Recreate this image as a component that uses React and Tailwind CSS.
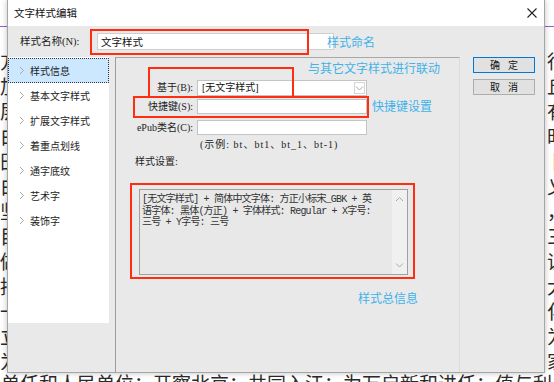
import React from 'react';

// text of the document page that sits behind the dialog
const DOC_LINES = [
  '方案坚持以人民为中心的发展思想，推进各项工作落实落细',
  '加强组织领导，压实工作责任，确保各项任务按期完成',
  '层层传导压力，形成上下联动、齐抓共管的工作格局',
  '白天走访群众，晚上集中研判，及时解决群众反映问题',
  '田间地头开展宣传，引导群众积极参与乡村振兴建设',
  '白纸黑字立下规矩，以制度管人管事，推动工作规范化',
  '坚持问题导向，聚焦重点难点，补齐短板弱项',
  '目标明确，措施有力，工作成效显著，群众满意度提升',
  '做好统筹协调，强化督查考核，确保责任落到实处',
  '持续深化改革，激发内生动力，增强发展后劲',
  '一是加强学习教育；二是强化作风建设；三是狠抓落实',
  '立足当前，着眼长远，统筹推进各项重点工作',
  '为民办实事，解民生难题，切实增强群众获得感',
];
const LAST_LINE = '单任和人民单位；开察北京；共同入江；为万启新和进任；值与利用早素从恋；职民恩；家';
const RIGHT_CHARS = ['行', '丘', '有', '时', '卜', '乂', '，', '三', '证', '大', '化', '为', '家'];

const NAV = ['样式信息', '基本文字样式', '扩展文字样式', '着重点划线', '通字底纹', '艺术字', '装饰字'];

function Chevron({ dir = 'right' }) {
  const d = {
    right: 'M1 1 L4.5 4.5 L1 8',
    down: 'M1 1.5 L4.5 5 L8 1.5',
    up: 'M1 5 L4.5 1.5 L8 5',
  }[dir];
  const size = dir === 'right' ? { width: 6, height: 9 } : { width: 9, height: 6 };
  return (
    <svg {...size} viewBox={`0 0 ${size.width} ${size.height}`}>
      <path d={d} fill="none" stroke="#a8a8a8" strokeWidth="1" />
    </svg>
  );
}

function Field({ label, children, className = '' }) {
  return (
    <div className={`flex items-center h-[15px] ${className}`}>
      <span className="w-[81px] pr-[4px] text-right text-[10px] leading-none text-[#222] whitespace-nowrap">
        {label}
      </span>
      {children}
    </div>
  );
}

export default function App() {
  return (
    <div className="relative w-[554px] h-[382px] overflow-hidden bg-white font-['Liberation_Serif','Noto_Sans_CJK_SC',serif]">
      {/* document page behind: only the strips around the dialog show */}
      <div className="absolute left-0 top-[48px] w-[7px] flex flex-col overflow-hidden">
        {DOC_LINES.map((line, i) => (
          <div key={i} className="h-[25px] text-[19px] leading-[25px] text-[#2a2a2a] whitespace-nowrap font-['Noto_Sans_CJK_SC',sans-serif]">
            {line}
          </div>
        ))}
      </div>
      <div className="absolute left-[545px] top-[48px] w-[9px] pl-[2px] flex flex-col overflow-hidden">
        {RIGHT_CHARS.map((ch, i) => (
          <div key={i} className="h-[25px] text-[19px] leading-[25px] text-[#2a2a2a] whitespace-nowrap font-['Noto_Sans_CJK_SC',sans-serif]">
            {ch}
          </div>
        ))}
      </div>
      <div className="absolute left-0 top-[373px] w-[554px] h-[9px] overflow-hidden">
        <div className="h-[25px] pl-[1px] text-[19px] leading-[25px] -mt-[3px] text-[#2a2a2a] whitespace-nowrap font-['Noto_Sans_CJK_SC',sans-serif]">
          {LAST_LINE}
        </div>
      </div>
      <div className="absolute left-0 right-0 top-[26px] h-px bg-[#9a5bd0]" />

      {/* dialog window */}
      <div className="absolute left-[7px] top-0 w-[538px] h-[373px] flex flex-col border-x border-b border-[#a6a6a6] shadow-[0_0_6px_rgba(0,0,0,0.25)]">
        <div className="h-[26px] shrink-0 bg-white flex items-center justify-between pl-[6px] pr-[7px]">
          <span className="text-[10.5px] text-[#111] font-['Noto_Sans_CJK_SC',sans-serif]">文字样式编辑</span>
          <svg width="10" height="10" viewBox="0 0 10 10">
            <path d="M0.5 0.5 L9.5 9.5 M9.5 0.5 L0.5 9.5" stroke="#222" strokeWidth="1.1" />
          </svg>
        </div>

        <div className="flex-1 bg-[#e9e9e9] flex flex-col">
          {/* name row */}
          <div className="h-[31px] shrink-0 flex items-center pl-[12px]">
            <span className="w-[77px] text-[10.5px] text-[#222] whitespace-nowrap">样式名称(N):</span>
            <div className="w-[237px] h-[17px] bg-white border border-[#cfcfcf] flex items-center pl-[3px] text-[10.5px] text-[#111] font-['Noto_Sans_CJK_SC',sans-serif]">
              文字样式
            </div>
          </div>

          <div className="flex-1 flex">
            {/* nav column */}
            <div className="w-[107px] shrink-0 flex flex-col">
              <div className="w-[101px] h-[266px] bg-white pt-px font-['Noto_Sans_CJK_SC',sans-serif]">
                {NAV.map((item, i) => (
                  <div
                    key={item}
                    className={`h-[25px] flex items-center pl-[10px] gap-[5px] text-[10px] text-[#222] ${
                      i === 0 ? 'bg-[#cce8ff] border border-dotted border-[#334]' : 'border border-transparent'
                    }`}
                  >
                    <Chevron />
                    <span>{item}</span>
                  </div>
                ))}
              </div>
            </div>

            {/* settings panel */}
            <div className="w-[345px] shrink-0 border-l border-t border-l-[#9c9c9c] border-t-[#a8a8a8] border-r border-r-[#dcdcdc] flex flex-col pt-[22px]">
              <Field label="基于(B):">
                <div className="w-[170px] h-[16px] bg-white border border-[#c4c4c4] flex items-center justify-between text-[10px] text-[#111]">
                  <span className="pl-[4px]">[无文字样式]</span>
                  <span className="w-[11px] h-[12px] mr-[1px] border border-[#d6d6d6] flex items-center justify-center">
                    <Chevron dir="down" />
                  </span>
                </div>
              </Field>
              <Field label="快捷键(S):" className="mt-[4px]">
                <div className="w-[170px] h-[15px] bg-white border border-[#c4c4c4]" />
              </Field>
              <Field label="ePub类名(C):" className="mt-[6px]">
                <div className="w-[170px] h-[15px] bg-white border border-[#c4c4c4]" />
              </Field>
              <div className="mt-[5px] h-[11px] pl-[84px] text-[10px] leading-none text-[#222] whitespace-nowrap tracking-[1px]">
                (示例: bt、bt1、bt_1、bt-1)
              </div>
              <div className="mt-[6px] h-[12px] pl-[19px] text-[10px] leading-none text-[#222]">样式设置:</div>

              <div className="mt-[20px] ml-[23px] w-[269px] h-[86px] border border-[#a0a0a0] bg-[#e8e8e8] flex">
                <div className="flex-1 pl-[2px] pt-[4px] text-[10px] leading-[11.5px] text-[#333] whitespace-nowrap font-['Liberation_Mono','Noto_Sans_CJK_SC',monospace] tracking-[-0.8px]">
                  [无文字样式] + 简体中文字体: 方正小标宋_GBK + 英
                  <br />
                  语字体: 黑体(方正) + 字体样式: Regular + X字号:
                  <br />
                  三号 + Y字号: 三号
                </div>
                <div className="w-[15px] bg-[#f0f0f0] flex flex-col items-center justify-between py-[6px]">
                  <Chevron dir="up" />
                  <Chevron dir="down" />
                </div>
              </div>
            </div>

            {/* buttons */}
            <div className="ml-[13px] flex flex-col gap-[6px] font-['Noto_Sans_CJK_SC',sans-serif]">
              <button className="w-[62px] h-[16px] border border-[#0078d7] bg-[#e1e1e1] text-[10px] leading-none text-[#111] tracking-[8px] pl-[8px]">
                确定
              </button>
              <button className="w-[62px] h-[16px] border border-[#adadad] bg-[#e1e1e1] text-[10px] leading-none text-[#111] tracking-[8px] pl-[8px]">
                取消
              </button>
            </div>
          </div>
        </div>
      </div>

      {/* red annotation boxes */}
      <div className="absolute left-[90px] top-[29px] w-[219px] h-[26px] border-2 border-[#ff2d12]" />
      <div className="absolute left-[148px] top-[67px] w-[146px] h-[31px] border-2 border-[#ff2d12]" />
      <div className="absolute left-[133px] top-[96px] w-[236px] h-[22px] border-2 border-[#ff2d12]" />
      <div className="absolute left-[130px] top-[183px] w-[285px] h-[96px] border-2 border-[#ff2d12]" />

      {/* blue annotation notes */}
      <div className="absolute font-['Noto_Sans_CJK_SC',sans-serif] text-[12px] leading-none text-[#3fb2ea]">
        <span className="absolute left-[327px] top-[36px] whitespace-nowrap">样式命名</span>
        <span className="absolute left-[308px] top-[62px] whitespace-nowrap">与其它文字样式进行联动</span>
        <span className="absolute left-[372px] top-[100px] whitespace-nowrap">快捷键设置</span>
        <span className="absolute left-[358px] top-[292px] whitespace-nowrap">样式总信息</span>
      </div>
    </div>
  );
}
